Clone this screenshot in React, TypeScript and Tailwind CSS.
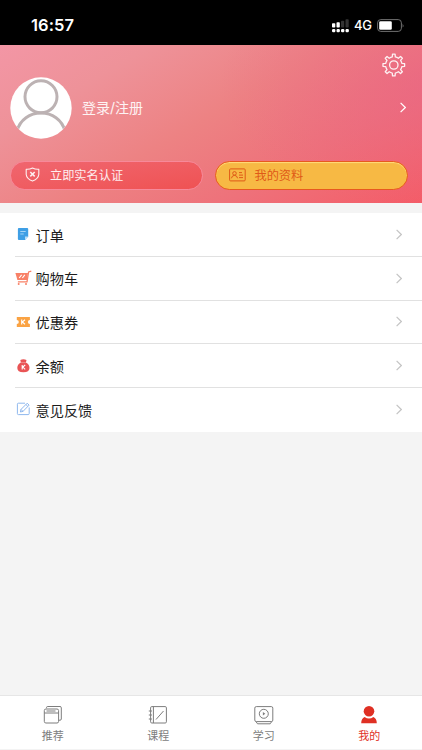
import React from "react";

const font = "font-['Inter','Noto_Sans_CJK_SC',sans-serif]";

function gearPath(cx: number, cy: number, outer: number, inner: number, teeth: number) {
  const step = (Math.PI * 2) / teeth;
  const pt = (r: number, a: number) =>
    `${(cx + r * Math.sin(a)).toFixed(2)} ${(cy - r * Math.cos(a)).toFixed(2)}`;
  let d = "";
  for (let i = 0; i < teeth; i++) {
    const a = i * step;
    d += `${i ? "L" : "M"}${pt(inner, a - step * 0.24)}L${pt(outer, a - step * 0.15)}L${pt(outer, a + step * 0.15)}L${pt(inner, a + step * 0.24)}`;
    d += `A${inner} ${inner} 0 0 1 ${pt(inner, a + step * 0.76)}`;
  }
  return d + "Z";
}

function StatusBar() {
  return (
    <div className="flex h-[45px] shrink-0 items-start justify-between bg-black pl-[31px] pr-[17px] pt-[15px] text-white">
      <span className="text-[16.5px] font-semibold leading-[21px] tracking-[0.1px]">16:57</span>
      <div className="flex h-[21px] items-center">
        <svg width="18" height="14" viewBox="0 0 18 14" className="mr-1">
          <g fill="#fff">
            <rect x="0" y="4.3" width="3.3" height="4.2" rx="0.8" />
            <rect x="4.5" y="3.3" width="3.3" height="5.2" rx="0.8" />
            <rect x="0" y="10" width="3.4" height="3.3" rx="1.2" />
            <rect x="4.5" y="10" width="3.4" height="3.3" rx="1.2" />
            <rect x="9" y="10" width="3.4" height="3.3" rx="1.2" />
            <rect x="13.5" y="10" width="3.4" height="3.3" rx="1.2" />
          </g>
          <g fill="#333">
            <rect x="9" y="1.8" width="3.2" height="6.7" rx="0.8" />
            <rect x="13.5" y="0.3" width="3.2" height="8.2" rx="0.8" />
          </g>
        </svg>
        <span className="mr-[5px] w-[18px] text-[13px] font-medium leading-[21px] tracking-[-0.2px]">4G</span>
        <svg width="28" height="13" viewBox="0 0 28 13">
          <rect x="0.6" y="0.6" width="23.8" height="11.8" rx="3.2" fill="none" stroke="#707070" />
          <rect x="2.2" y="2.2" width="12.6" height="8.6" rx="1.3" fill="#fff" />
          <path d="M25.6 4.5Q27.4 6.5 25.6 8.5Z" fill="#707070" />
        </svg>
      </div>
    </div>
  );
}

function Chevron({ className }: { className: string }) {
  return (
    <svg width="6" height="11" viewBox="0 0 6 11" fill="none" stroke="currentColor" className={className}>
      <path d="M0.6 0.8L5.3 5.5L0.6 10.2" strokeWidth="1.2" />
    </svg>
  );
}

function Header() {
  return (
    <header className="flex h-[158px] shrink-0 flex-col bg-[radial-gradient(ellipse_50%_80%_at_102%_25%,rgba(233,100,134,0.6),transparent),linear-gradient(150deg,#f396a5_0%,#ee9299_22%,#ed8283_48%,#ee717a_72%,#f45c67_100%)]">
      <div className="flex h-[32px] justify-end pr-[16px] pt-[8px]">
        <svg width="25" height="25" viewBox="0 0 25 25" fill="none" stroke="#fff" strokeOpacity="0.9" strokeWidth="1.3" strokeLinejoin="round">
          <path d={gearPath(12.8, 12, 10.9, 8.2, 8)} />
          <circle cx="12.8" cy="12" r="4.2" />
        </svg>
      </div>
      <div className="flex h-[62px] items-center pl-[10px] pr-[16px]">
        <svg width="62" height="62" viewBox="0 0 62 62">
          <defs>
            <clipPath id="face"><circle cx="31" cy="31" r="30.6" /></clipPath>
          </defs>
          <circle cx="31" cy="31" r="30.7" fill="#fff" />
          <g clipPath="url(#face)" fill="none" stroke="#bcb2b3" strokeWidth="3">
            <circle cx="31" cy="19.8" r="16" />
            <path d="M7 54C10 42.5 20 36 31 36S52 42.5 55 54" />
          </g>
        </svg>
        <span className="ml-[10px] text-[14px] leading-5 text-white/90">登录/注册</span>
        <Chevron className="mb-px ml-auto text-white" />
      </div>
      <div className="mt-[22px] flex gap-[12px] pl-[10px]">
        <button className="flex h-[28.5px] w-[193px] items-center rounded-full border border-[#f7899a] bg-linear-to-br from-[#f0666f] to-[#ef5253] pl-[14px] text-[12.2px] text-white/90">
          <svg width="15" height="15" viewBox="0 0 15 15" fill="none" stroke="currentColor" strokeWidth="1.1" className="mb-px mr-[10px]">
            <path d="M7.5 1Q10.5 2.5 13.8 2.2V7.5Q13.4 11.8 7.5 14.1Q1.6 11.8 1.2 7.5V2.2Q4.5 2.5 7.5 1Z" strokeLinejoin="round" />
            <path d="M5.3 5L9.7 9.4M9.7 5L5.3 9.4" strokeWidth="1.5" />
          </svg>
          <span className="pt-px">立即实名认证</span>
        </button>
        <button className="flex h-[28.5px] w-[193px] items-center rounded-full border border-[#e8591f] bg-[#f7b944] pl-[12.5px] text-[12.2px] text-[#df5a17] shadow-[inset_0_1px_1px_#ffdc7d]">
          <svg width="17" height="14" viewBox="0 0 17 14" fill="none" stroke="currentColor" className="mb-px mr-[9px]">
            <rect x="0.6" y="0.9" width="15.6" height="12" rx="1" />
            <circle cx="5.5" cy="5.4" r="1.8" />
            <path d="M2.4 10.3Q3 7.4 5.5 7.3Q8 7.4 8.6 10.3M10 4.6H13M10 7.1H14M10 9.6H14" />
          </svg>
          <span className="pt-px">我的资料</span>
        </button>
      </div>
    </header>
  );
}

const OrderIcon = () => (
  <svg width="16" height="16" viewBox="0 0 16 16">
    <path d="M3.9 2H12.2Q13.2 2 13.2 3V10.5L10 14H3.9Q2.9 14 2.9 13V3Q2.9 2 3.9 2Z" fill="#3f9fe5" />
    <path d="M10 14V10.5H13.2Z" fill="#b9def8" />
    <path d="M5.3 5.5H10.7M5.3 8H8.7" stroke="#a5d4f6" />
  </svg>
);
const CartIcon = () => (
  <svg width="17" height="16" viewBox="0 0 17 16" className="-mr-px">
    <path d="M0.4 3H13L12 10H2.4Z" fill="#f88167" />
    <path d="M16.3 1.2L13.6 2L12 11.8H2.9" fill="none" stroke="#f88167" strokeWidth="1.3" />
    <path d="M4.2 8L6.6 4.8M7.4 8L9.8 4.8" stroke="#fff" strokeWidth="1.1" />
    <circle cx="3.7" cy="14" r="1" fill="#f88167" />
    <circle cx="11" cy="14" r="1" fill="#f88167" />
  </svg>
);
const CouponIcon = () => (
  <svg width="16" height="16" viewBox="0 0 16 16">
    <path d="M1.8 3H14.9V6A2 2 0 0 0 14.9 10V13H1.8V10A2 2 0 0 0 1.8 6Z" fill="#faa344" />
    <path d="M6.7 5.6V10.4M10 5.8L7.3 8L10 10.2" stroke="#fff" strokeWidth="1.1" fill="none" />
  </svg>
);
const BalanceIcon = () => (
  <svg width="16" height="16" viewBox="0 0 16 16">
    <path d="M5.3 2Q8.4 0.3 11.5 2L10.9 4.5Q14.5 6.3 14.5 10Q14.5 14.2 8.4 14.2T2.3 10Q2.3 6.3 5.9 4.5Z" fill="#e95455" />
    <path d="M5.9 4.6H10.9" stroke="#f3a0a0" strokeWidth="0.7" />
    <path d="M7.2 7V11.4M10.2 7L7.8 9.1L10.2 11.3" stroke="#fff" strokeWidth="1.1" fill="none" />
  </svg>
);
const FeedbackIcon = () => (
  <svg width="16" height="16" viewBox="0 0 16 16" fill="none" stroke="#8fb8ee">
    <path d="M10 2.2H3.4Q2.4 2.2 2.4 3.2V12.6Q2.4 13.6 3.4 13.6H13.2Q14.2 13.6 14.2 12.6V6.5" />
    <path d="M5.4 11L6 8.4L12.2 2.2L14.1 4.1L8 10.4ZM6 8.4L8 10.4M10.9 3.5L12.8 5.4" />
  </svg>
);

const rows = [
  { label: "订单", Icon: OrderIcon },
  { label: "购物车", Icon: CartIcon },
  { label: "优惠券", Icon: CouponIcon },
  { label: "余额", Icon: BalanceIcon },
  { label: "意见反馈", Icon: FeedbackIcon },
];

function Menu() {
  return (
    <ul className="mt-[10px] shrink-0 bg-white">
      {rows.map(({ label, Icon }, i) => (
        <li key={label} className="pl-[15px]">
          <div className={`flex items-center pr-[20px] ${i < rows.length - 1 ? "h-[43.8px] border-b border-[#e1e1e1]" : "h-[43.8px] pb-[1.5px]"}`}>
            <Icon />
            <span className="ml-[4.5px] mt-[2.6px] text-[14.2px] leading-5 text-[#1c1c1c]">{label}</span>
            <Chevron className="ml-auto text-[#c4c4c4]" />
          </div>
        </li>
      ))}
    </ul>
  );
}

const tabs = [
  {
    label: "推荐",
    icon: (
      <g>
        <path d="M3.5 3.2V2.6Q3.5 1.5 4.8 1.5H17Q18.3 1.5 18.3 2.8V14Q18.3 15.2 17 15.2H16" />
        <rect x="1.3" y="4" width="14.3" height="14" rx="1.6" />
        <path d="M1.3 8H15.6M3.5 6H12.5" />
      </g>
    ),
  },
  {
    label: "课程",
    icon: (
      <g>
        <rect x="2.6" y="1.6" width="15.8" height="16.4" rx="1.2" />
        <path d="M5.4 1.6V18M8 14.5L15.5 6M0.8 6H4M0.8 10H4M0.8 14H4" />
      </g>
    ),
  },
  {
    label: "学习",
    icon: (
      <g>
        <rect x="0.8" y="1.6" width="18" height="15" rx="1.5" />
        <circle cx="9.8" cy="8.8" r="4.5" />
        <path d="M8.9 7L11.3 8.8L8.9 10.6Z" fill="currentColor" stroke="none" />
        <path d="M2 16.6L3.5 18.8H16.2L17.7 16.6" />
      </g>
    ),
  },
  {
    label: "我的",
    active: true,
    icon: (
      <g fill="currentColor" stroke="none">
        <circle cx="10" cy="6.2" r="5.3" />
        <path d="M2.2 18.2Q2.3 13.2 5.6 11.9Q10 15.1 14.4 11.9Q17.7 13.2 17.8 18.2Z" />
      </g>
    ),
  },
];

function TabBar() {
  return (
    <nav className="mt-auto grid h-[55px] shrink-0 grid-cols-4 border-b border-t border-b-[#f3f3f3] border-t-[#e6e6e6] bg-white">
      {tabs.map((t) => (
        <div key={t.label} className={`flex flex-col items-center pt-[9px] ${t.active ? "text-[#df3024]" : "text-[#7d7d7d]"}`}>
          <svg width="20" height="20" viewBox="0 0 20 20" fill="none" stroke="currentColor" strokeWidth="1">{t.icon}</svg>
          <span className="mt-[3px] text-[11px] leading-4">{t.label}</span>
        </div>
      ))}
    </nav>
  );
}

export default function App() {
  return (
    <div className={`flex h-[750px] w-[422px] flex-col overflow-hidden bg-[#f4f4f4] ${font}`}>
      <StatusBar />
      <Header />
      <Menu />
      <TabBar />
    </div>
  );
}
